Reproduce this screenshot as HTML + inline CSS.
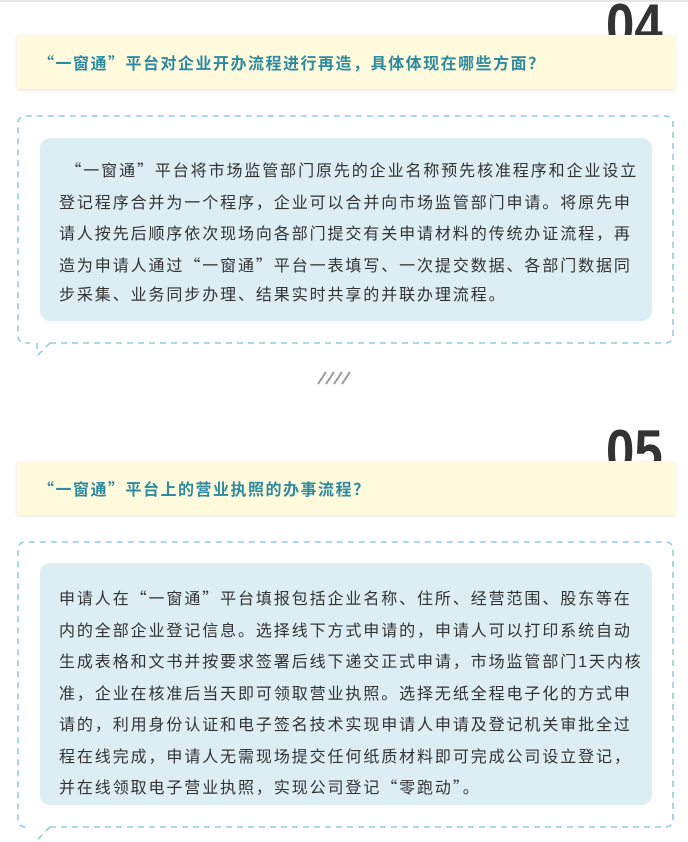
<!DOCTYPE html>
<html><head><meta charset="utf-8"><style>
body{margin:0;width:688px;height:842px;background:#fff;position:relative;overflow:hidden;font-family:"Liberation Sans","Noto Sans CJK SC",sans-serif}
.q{font-family:"Noto Sans CJK SC",sans-serif}
.top{position:absolute;left:0;top:0;width:688px;height:2px;background:#e6e6e6}
.num{position:absolute;left:606px;font-size:60px;font-weight:bold;color:#333;line-height:1;z-index:0;transform:scaleX(.85);transform-origin:left top}
.yb{position:absolute;left:17px;width:658px;height:54px;background:#fffadb;box-shadow:0 1px 3px rgba(0,0,0,.12);z-index:1}
.yb > span{position:absolute;left:21px;top:15px;font-size:16px;font-weight:bold;color:#2e8aa0;letter-spacing:1.5px;white-space:nowrap}
svg{position:absolute;left:0;top:0}
.ib{position:absolute;left:40px;width:612px;background:#dceef4;border-radius:10px}
.ib div{position:absolute;left:19px;font-size:16px;letter-spacing:1.9px;color:#333;line-height:29.5px;white-space:nowrap}
</style></head><body>
<div class="top"></div>
<div class="num" style="top:-4px">04</div>
<div class="yb" style="top:35px"><span><span class="q">“</span>一窗通<span class="q">”</span>平台对企业开办流程进行再造<span class="q">，</span>具体体现在哪些方面<span class="q">？</span></span></div>
<svg width="688" height="842">
<g fill="none" stroke="#90cfdc" stroke-width="1.6" stroke-dasharray="6 5">
<path d="M50 343 H665 Q673 343 673 335 V124 Q673 116 665 116 H26 Q18 116 18 124 V335 Q18 343 26 343 H30"/>
<path d="M50 343 L37 356 M37 343 V350"/>
<path d="M50 827 H665 Q673 827 673 819 V550 Q673 542 665 542 H26 Q18 542 18 550 V819 Q18 827 26 827 H30"/>
<path d="M50 827 L37 840"/>
</g>
<g stroke="#9a9a9a" stroke-width="2"><path d="M318 384 L326 372 M326 384 L334 372 M334 384 L342 372 M342 384 L350 372"/></g>
</svg>
<div class="ib" style="top:138px;height:183px">
<div style="top:17px">&nbsp;<span class="q">“</span>一窗通<span class="q">”</span>平台将市场监管部门原先的企业名称预先核准程序和企业设立<br>登记程序合并为一个程序<span class="q">，</span>企业可以合并向市场监管部门申请。将原先申<br>请人按先后顺序依次现场向各部门提交有关申请材料的传统办证流程<span class="q">，</span>再<br>造为申请人通过<span class="q">“</span>一窗通<span class="q">”</span>平台一表填写、一次提交数据、各部门数据同<br>步采集、业务同步办理、结果实时共享的并联办理流程。</div>
</div>
<div class="num" style="top:422px">05</div>
<div class="yb" style="top:461px"><span><span class="q">“</span>一窗通<span class="q">”</span>平台上的营业执照的办事流程<span class="q">？</span></span></div>
<div class="ib" style="top:563px;height:242px">
<div style="top:20px">申请人在<span class="q">“</span>一窗通<span class="q">”</span>平台填报包括企业名称、住所、经营范围、股东等在<br>内的全部企业登记信息。选择线下方式申请的<span class="q">，</span>申请人可以打印系统自动<br>生成表格和文书并按要求签署后线下递交正式申请<span class="q">，</span>市场监管部门1天内核<br>准<span class="q">，</span>企业在核准后当天即可领取营业执照。选择无纸全程电子化的方式申<br>请的<span class="q">，</span>利用身份认证和电子签名技术实现申请人申请及登记机关审批全过<br>程在线完成<span class="q">，</span>申请人无需现场提交任何纸质材料即可完成公司设立登记<span class="q">，</span><br>并在线领取电子营业执照<span class="q">，</span>实现公司登记<span class="q">“</span>零跑动<span class="q">”</span>。</div>
</div>
</body></html>
